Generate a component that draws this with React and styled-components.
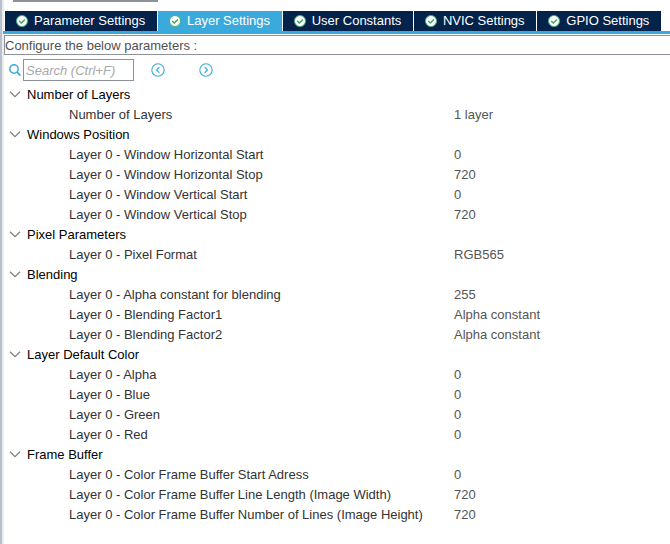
import React, { Component } from 'react';
import styled, { createGlobalStyle, css } from 'styled-components';


const GlobalStyle = createGlobalStyle`
  * {
    box-sizing: border-box;
  }

  body {
    margin: 0;
    background: #fff;
    font-family: "Liberation Sans", Arial, sans-serif;
    font-size: 13px;
    line-height: 20px;
  }

  button, input {
    font: inherit;
  }
`

const Panel = styled.main`
  min-height: 100vh;
  border-left: 2px solid #b7c1cb;
  box-shadow: inset 2px 0 #e9edf0;
  overflow: hidden;
`

const TopEdge = styled.div`
  width: 145px;
  height: 2px;
  margin: 0 0 9px 11px;
  background: #8d9299;
`

const Tabs = styled.nav`
  display: flex;
  gap: 1px;
  margin-left: 1px;
  padding: 0 9px 0 2px;
  border-bottom: 3px solid #3aa9dc;
`

const Tab = styled.button`
  display: flex;
  flex: 1 0 auto;
  align-items: center;
  gap: 6px;
  height: 20px;
  padding: 0 11px;
  border: 0;
  background: #03234b;
  color: #fff;
  font-size: 13px;
  line-height: 20px;
  white-space: nowrap;
  cursor: pointer;

  svg {
    flex: none;
  }

  ${({ $active }) => $active && css`
    background: #3aa9dc;
  `}
`

const Caption = styled.div`
  margin: 1px 0 0 2px;
  padding-top: 2px;
  border: 1px solid #8d9299;
  border-right: 0;
  color: #505050;
  line-height: 16px;
`

const Toolbar = styled.div`
  display: flex;
  align-items: center;
  margin-top: 4px;
  padding-left: 7px;
`

const SearchLabel = styled.label`
  display: flex;
  width: 14px;
`

const SearchInput = styled.input`
  width: 111px;
  height: 22px;
  padding: 0 2px;
  border: 1px solid #8d9299;
  background: #fff;
  outline: 0;

  &::placeholder {
    color: #a8a8a8;
    font-style: italic;
    opacity: 1;
  }
`

const NavButtons = styled.div`
  display: flex;
  gap: 34px;
  margin-left: 17px;
`

const IconButton = styled.button`
  display: flex;
  padding: 0;
  border: 0;
  background: none;
  color: #3aa9dc;
  cursor: pointer;
`

const ParamTable = styled.table`
  width: 100%;
  margin-top: 4px;
  border-collapse: collapse;
  table-layout: fixed;

  th, td {
    height: 20px;
    padding: 0;
    font-weight: normal;
    text-align: left;
    white-space: nowrap;
  }
`

const NameColumn = styled.col`
  width: 452px;
`

const GroupToggle = styled.button`
  display: flex;
  align-items: center;
  gap: 6px;
  height: 20px;
  padding: 0 0 0 7px;
  border: 0;
  background: none;
  color: #000;
  cursor: pointer;
`

const Name = styled.th`
  color: #333;

  && {
    padding-left: 67px;
  }
`

const Value = styled.td`
  color: #555;
`

const CheckIcon = () => (
  <svg width="12" height="12" viewBox="0 0 12 12" aria-hidden="true">
    <circle cx="6" cy="6" r="5.5" fill="#fff" stroke="#49b072" />
    <path d="M3.2 6l2.1 2.1 3.6-3.7" fill="none" stroke="#3aa565" strokeWidth="1.4" />
  </svg>
)

const SearchIcon = () => (
  <svg width="12" height="12" viewBox="0 0 12 12" fill="none" stroke="#3aa9dc" aria-hidden="true">
    <circle cx="5" cy="5" r="4.2" strokeWidth="1.5" />
    <path d="M8 8l3.4 3.6" strokeWidth="1.8" />
  </svg>
)

const ArrowIcon = ({ d }) => (
  <svg width="14" height="14" viewBox="0 0 14 14" fill="none" stroke="currentColor" aria-hidden="true">
    <circle cx="7" cy="7" r="6.2" strokeWidth="1.1" />
    <path d={d} strokeWidth="1.2" />
  </svg>
)

const ChevronIcon = ({ open }) => (
  <svg width="12" height="12" viewBox="0 0 12 12" fill="none" stroke="#808080" strokeWidth="1.3" aria-hidden="true">
    <path d={open ? 'M1 2.7l5 5 5-5' : 'M3.5 1l5 5-5 5'} />
  </svg>
)

const tabs = ['Parameter Settings', 'Layer Settings', 'User Constants', 'NVIC Settings', 'GPIO Settings'];

const groups = [
  {
    title: 'Number of Layers',
    params: [['Number of Layers', '1 layer']],
  },
  {
    title: 'Windows Position',
    params: [
      ['Layer 0 - Window Horizontal Start', '0'],
      ['Layer 0 - Window Horizontal Stop', '720'],
      ['Layer 0 - Window Vertical Start', '0'],
      ['Layer 0 - Window Vertical Stop', '720'],
    ],
  },
  {
    title: 'Pixel Parameters',
    params: [['Layer 0 - Pixel Format', 'RGB565']],
  },
  {
    title: 'Blending',
    params: [
      ['Layer 0 - Alpha constant for blending', '255'],
      ['Layer 0 - Blending Factor1', 'Alpha constant'],
      ['Layer 0 - Blending Factor2', 'Alpha constant'],
    ],
  },
  {
    title: 'Layer Default Color',
    params: [
      ['Layer 0 - Alpha', '0'],
      ['Layer 0 - Blue', '0'],
      ['Layer 0 - Green', '0'],
      ['Layer 0 - Red', '0'],
    ],
  },
  {
    title: 'Frame Buffer',
    params: [
      ['Layer 0 - Color Frame Buffer Start Adress', '0'],
      ['Layer 0 - Color Frame Buffer Line Length (Image Width)', '720'],
      ['Layer 0 - Color Frame Buffer Number of Lines (Image Height)', '720'],
    ],
  },
];

class App extends Component {
  constructor(props) {
    super(props);
    this.state = {
      activeTab : 'Layer Settings',
      search : '',
      closed : {},
    }
  }

  handleSearch = e => {
    this.setState({ search : e.target.value });
  }

  toggleGroup = title => {
    const {closed} = this.state;
    this.setState({ closed : { ...closed, [title] : !closed[title] } });
  }

  render() {
    const {activeTab, search, closed} = this.state;

    return (
      <Panel>
        <GlobalStyle />
        <TopEdge />
        <Tabs>
          {tabs.map(tab => (
            <Tab
              key={tab}
              type="button"
              $active={tab === activeTab}
              onClick={() => this.setState({ activeTab : tab })}
            >
              <CheckIcon />
              {tab}
            </Tab>
          ))}
        </Tabs>
        <Caption>Configure the below parameters :</Caption>
        <Toolbar>
          <SearchLabel htmlFor="search" aria-label="Search">
            <SearchIcon />
          </SearchLabel>
          <SearchInput
            id="search"
            type="text"
            placeholder="Search (Ctrl+F)"
            value={search}
            onChange={this.handleSearch}
          />
          <NavButtons>
            <IconButton type="button" aria-label="Previous">
              <ArrowIcon d="M8.4 4.2L5.6 7l2.8 2.8" />
            </IconButton>
            <IconButton type="button" aria-label="Next">
              <ArrowIcon d="M5.6 4.2L8.4 7 5.6 9.8" />
            </IconButton>
          </NavButtons>
        </Toolbar>
        <ParamTable>
          <colgroup>
            <NameColumn />
            <col />
          </colgroup>
          {groups.map(({ title, params }) => (
            <tbody key={title}>
              <tr>
                <th colSpan="2" scope="rowgroup">
                  <GroupToggle
                    type="button"
                    aria-expanded={!closed[title]}
                    onClick={() => this.toggleGroup(title)}
                  >
                    <ChevronIcon open={!closed[title]} />
                    {title}
                  </GroupToggle>
                </th>
              </tr>
              {!closed[title] && params.map(([name, value]) => (
                <tr key={name}>
                  <Name scope="row">{name}</Name>
                  <Value>{value}</Value>
                </tr>
              ))}
            </tbody>
          ))}
        </ParamTable>
      </Panel>
    );
  }
}

export default App;
